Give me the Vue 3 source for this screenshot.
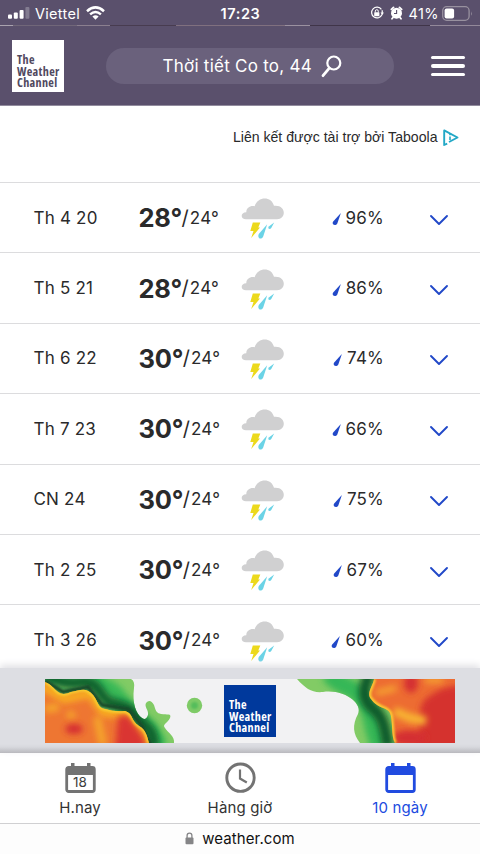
<script setup>
const days = [
  { date: 'Th 4 20', high: 28, low: 24, rain: 96 },
  { date: 'Th 5 21', high: 28, low: 24, rain: 86 },
  { date: 'Th 6 22', high: 30, low: 24, rain: 74 },
  { date: 'Th 7 23', high: 30, low: 24, rain: 66 },
  { date: 'CN 24', high: 30, low: 24, rain: 75 },
  { date: 'Th 2 25', high: 30, low: 24, rain: 67 },
  { date: 'Th 3 26', high: 30, low: 24, rain: 60 },
]
</script>

<template>
  <div class="screen">
    <header class="top">
      <div class="status">
        <div class="status-left">
          <svg class="signal" width="22" height="12" viewBox="0 0 22 12">
            <rect x="0" y="7.5" width="4" height="4.2" rx="1" fill="#fff" />
            <rect x="5.8" y="5.4" width="4" height="6.3" rx="1" fill="#fff" />
            <rect x="11.6" y="3" width="4" height="8.7" rx="1" fill="#fff" />
            <rect x="17.4" y="0" width="4" height="11.7" rx="1" fill="#fff" opacity=".25" />
          </svg>
          <span class="carrier">Viettel</span>
          <svg class="wifi" width="19" height="14" viewBox="0 0 19 14">
            <g fill="none" stroke="#fff" stroke-width="2.5">
              <path d="M1 5.2Q9.5-2.4 18 5.2" />
              <path d="M4.1 8.4Q9.5 3.6 14.9 8.4" />
            </g>
            <path d="M6.4 10.5Q9.5 7.9 12.6 10.5L9.5 13.8Z" fill="#fff" />
          </svg>
        </div>
        <span class="time">17:23</span>
        <div class="status-right">
          <svg width="14" height="14" viewBox="0 0 14 14">
            <path d="M11.4 3.4A5.4 5.4 0 1 0 12 8.6" fill="none" stroke="#fff" stroke-width="1.2" />
            <path d="M12 4.2A5.4 5.4 0 0 1 12.2 7" fill="none" stroke="#fff" stroke-width="1.2" />
            <path d="M10.5 6.6h3.4L12.2 9.2z" fill="#fff" />
            <rect x="4.2" y="6.2" width="5.2" height="4" rx=".6" fill="#fff" />
            <path d="M5.3 6.5V5.2a1.5 1.5 0 0 1 3 0v1.3" fill="none" stroke="#fff" stroke-width="1" />
          </svg>
          <svg class="alarm" width="13" height="14" viewBox="0 0 13 14">
            <circle cx="6.5" cy="7.2" r="5.5" fill="#fff" />
            <path d="M1.400 3.400 3.500 1.400M11.600 3.400 9.500 1.400M3 11.500 2 12.800M10 11.500l1 1.300" stroke="#fff" stroke-width="1.800" stroke-linecap="round" />
            <path d="M6.6 4v3.5H4" fill="none" stroke="#5a506c" stroke-width="1.1" />
          </svg>
          <span class="percent">41%</span>
          <svg class="battery" width="31" height="15" viewBox="0 0 31 15">
            <rect x=".7" y=".7" width="26.4" height="13.6" rx="4" fill="none" stroke="#98919f" stroke-width="1.3" />
            <rect x="2.6" y="2.6" width="9.5" height="9.8" rx="2" fill="#fff" />
            <path d="M29 5.2Q30.5 7.5 29 9.8z" fill="#98919f" />
          </svg>
        </div>
      </div>
      <div class="sliver"></div>
      <div class="nav">
        <div class="logo">The<br />Weather<br />Channel</div>
        <div class="search">
          <span>Thời tiết Co to, 44</span>
          <svg width="21" height="23" viewBox="0 0 21 23">
            <circle cx="12.8" cy="8" r="6.5" fill="none" stroke="#fff" stroke-width="2.2" />
            <path d="M8.3 13.2 2 20.7" stroke="#fff" stroke-width="2.8" stroke-linecap="round" />
          </svg>
        </div>
        <div class="burger"><i></i><i></i><i></i></div>
      </div>
    </header>

    <div class="sponsored">
      <span>Liên kết được tài trợ bởi Taboola</span>
      <svg width="16" height="18" viewBox="0 0 16 18">
        <path d="M4.2 14.7 1.2 16V1.4L14.5 8.5 6 13" fill="none" stroke="#22a8c6" stroke-width="1.9" stroke-linejoin="round" />
        <path d="M7 5v1.300M7 7.400V11" stroke="#22a8c6" stroke-width="1.600" />
      </svg>
    </div>

    <main class="days">
      <div v-for="day in days" :key="day.date" class="day">
        <span class="date">{{ day.date }}</span>
        <div class="temps">
          <b>{{ day.high }}°</b><span class="slash">/</span><span class="low">{{ day.low }}°</span>
        </div>
        <svg class="storm" width="44" height="43" viewBox="0 0 44 43">
          <path d="M5 22.200C-.8 22.200-.8 15.500 5.300 15.300 5.200 10.800 9.500 8.300 13.600 9.300 16.700-1 30.500-1.200 33 8.800 45.500 7.500 45.500 22.200 36 22.200Z" fill="#d0d0d1" />
          <path d="M11.800 25.500H19.300l-2 5H19L10.200 41l2.300-7H9.300Z" fill="#ecd91c" />
          <path d="M26.200 27.300 17.800 37C15.800 41 20.300 43.500 22.200 39.500Z" fill="#6bd3e6" />
          <path d="M33.200 25.400 27.800 29.500C26.100 31.500 29 33.200 30.400 30.800Z" fill="#6bd3e6" />
        </svg>
        <div class="rain">
          <svg width="10" height="14" viewBox="0 0 10 14">
            <path d="M8.900 1.100 1.200 9.500C-.8 12.300 3.300 14.500 5.300 11.400Z" fill="#2148c8" />
          </svg>
          <span>{{ day.rain }}%</span>
        </div>
        <svg class="chevron" width="20" height="12" viewBox="0 0 20 12">
          <path d="M2 2 10 10 18 2" fill="none" stroke="#2148c8" stroke-width="1.900" stroke-linecap="round" stroke-linejoin="round" />
        </svg>
      </div>
    </main>

    <section class="ad">
      <div class="banner">
        <svg class="radar" width="410" height="64" viewBox="0 0 410 64">
          <defs>
            <filter id="soft" filterUnits="userSpaceOnUse" x="-20" y="-20" width="450" height="104"><feGaussianBlur stdDeviation="3.200" /></filter>
            <filter id="edge" filterUnits="userSpaceOnUse" x="-20" y="-20" width="450" height="104"><feGaussianBlur stdDeviation="1.200" /></filter>
            <clipPath id="greenLeft"><path d="M0 0H86Q90 2 89 9C87 24 91 35 97 39Q101 42 103 36C104 31 99 28 101 24Q105 19 109 26C111 33 112 34 116 35C122 36 127 34 125 39C122 45 117 45 120 49C123 54 130 57 129 64H0Z" /></clipPath>
            <clipPath id="greenRight"><path d="M252 0C261 10 267 14 278 13C300 10 318 25 313 35C307 46 308 55 315 64H410V0Z" /></clipPath>
            <clipPath id="heatLeft"><path d="M0 3C6 5 9 10 13 13Q18 17 26 13C36 11 41 8 48 16C54 24 53 29 60 30Q69 33 80 32C89 35 85 41 94 47C101 51 102 57 104 64H0Z" /></clipPath>
            <clipPath id="heatRight"><path d="M329 0C328 7 321 14 326 20C333 30 342 28 345 34C348 40 346 58 350 64H410V0Z" /></clipPath>
          </defs>
          <rect width="410" height="64" fill="#f2f2f3" />
          <g clip-path="url(#greenLeft)">
            <rect width="135" height="64" fill="#82cb65" />
            <path d="M0-5H46C54 8 69 7 74 18C82 29 91 34 96 42C105 46 108 53 116 68" fill="none" stroke="#38b957" stroke-width="15" filter="url(#soft)" />
            <path d="M0-3C13 2 24 6 38 3C54 2 54 19 66 24C82 27 92 33 99 46C107 51 109 58 109 68" fill="none" stroke="#08602f" stroke-width="11" filter="url(#soft)" />
            <path d="M0 2 18 13 43 8 57 26 83 30 97 47 106 66" fill="none" stroke="#164c2c" stroke-width="4" filter="url(#edge)" />
          </g>
          <g clip-path="url(#heatLeft)">
            <rect width="110" height="64" fill="#ee7632" />
            <path d="M-3 7 20 20 45 14 58 33 82 36 102 66" fill="none" stroke="#f8ad24" stroke-width="9" filter="url(#soft)" />
            <path d="M0 30 14 28M28 33 24 39M52 38 58 66" fill="none" stroke="#f5a52a" stroke-width="8" filter="url(#soft)" />
            <ellipse cx="29" cy="50" rx="9" ry="5" fill="#d42a30" filter="url(#soft)" />
            <path d="M73 37 83 36 100 60 100 72H70Z" fill="#da3430" filter="url(#soft)" />
            <path d="M0 3C6 5 9 10 13 13Q18 17 26 13C36 11 41 8 48 16C54 24 53 29 60 30Q69 33 80 32C89 35 85 41 94 47C101 51 102 57 104 64" fill="none" stroke="#f8d12d" stroke-width="3.500" filter="url(#edge)" />
          </g>
          <g clip-path="url(#greenRight)">
            <rect x="245" width="165" height="64" fill="#82cb65" />
            <path d="M284-5C294 9 309 6 318 21C328 30 325 48 335 68" fill="none" stroke="#36b756" stroke-width="17" filter="url(#soft)" />
            <path d="M325-5C318 8 317 18 326 28C338 36 340 48 343 68" fill="none" stroke="#095a2c" stroke-width="12" filter="url(#soft)" />
          </g>
          <g clip-path="url(#heatRight)">
            <rect x="320" width="90" height="64" fill="#ed6c32" />
            <path d="M366 72C382 45 368 28 383 18S400 8 420 6V80Z" fill="#d5302f" filter="url(#soft)" />
            <ellipse cx="366" cy="4" rx="7" ry="10" fill="#d42f31" filter="url(#soft)" />
            <ellipse cx="364" cy="59" rx="17" ry="8" fill="#d42f31" filter="url(#soft)" />
            <path d="M349 32 365 39 381 42" stroke="#f8b530" stroke-width="9" fill="none" filter="url(#soft)" />
            <path d="M331 14 351 9M380 1H398" stroke="#f5a130" stroke-width="6" fill="none" filter="url(#soft)" />
            <path d="M329 0C328 7 321 14 326 20C333 30 342 28 345 34C348 40 346 58 350 64" fill="none" stroke="#f9ce32" stroke-width="4" filter="url(#edge)" />
          </g>
          <circle cx="149.500" cy="26.500" r="7.700" fill="#7fcb67" />
          <circle cx="149.500" cy="26.500" r="3.500" fill="#55bd5c" filter="url(#edge)" />
        </svg>
        <div class="logo blue">The<br />Weather<br />Channel</div>
      </div>
    </section>

    <nav class="tabs">
      <div class="tab">
        <div class="calendar">
          <svg width="31" height="31" viewBox="0 0 31 31">
            <rect x="1.700" y="5.500" width="27.600" height="24" rx="2" fill="none" stroke="currentColor" stroke-width="2.800" />
            <path d="M1 5h29v8H1zM6 1h3.500v6H6zM22 1h3.500v6H22z" fill="currentColor" />
          </svg>
          <span>18</span>
        </div>
        <span class="label">H.nay</span>
      </div>
      <div class="tab">
        <svg width="31" height="31" viewBox="0 0 31 31">
          <circle cx="15.500" cy="15.700" r="13.700" fill="none" stroke="currentColor" stroke-width="2.900" />
          <path d="M15 7.500V16.500L21.800 20.500" fill="none" stroke="currentColor" stroke-width="2.200" />
        </svg>
        <span class="label">Hàng giờ</span>
      </div>
      <div class="tab active">
        <svg width="31" height="31" viewBox="0 0 31 31">
          <rect x="1.700" y="5.500" width="27.600" height="24" rx="2" fill="none" stroke="currentColor" stroke-width="2.800" />
          <path d="M1 5h29v8H1zM6 1h3.500v6H6zM22 1h3.500v6H22z" fill="currentColor" />
        </svg>
        <span class="label">10 ngày</span>
      </div>
    </nav>

    <footer class="address">
      <svg width="9" height="13" viewBox="0 0 9 13">
        <rect x=".5" y="5.400" width="8" height="6.800" rx="1" fill="#858587" />
        <path d="M2.100 6V3.500a2.400 2.400 0 0 1 4.800 0V6" fill="none" stroke="#858587" stroke-width="1.300" />
      </svg>
      <span>weather.com</span>
    </footer>
  </div>
</template>

<style>
body {
  margin: 0;
  background: #fff;
}
</style>

<style scoped>
.screen {
  width: 480px;
  height: 854px;
  overflow: hidden;
  display: flex;
  flex-direction: column;
  background: #fff;
  color: #2a2a2b;
  font-family: Inter, "Liberation Sans", sans-serif;
}
svg {
  display: block;
  flex: none;
}
.top {
  height: 106px;
  flex: none;
  box-sizing: border-box;
  background: #5a506c;
  border-bottom: 1px solid #928c9e;
  color: #fff;
}
.status {
  height: 25px;
  display: grid;
  grid-template-columns: 1fr auto 1fr;
  align-items: center;
  padding: 1px 7px 0 8px;
  box-sizing: border-box;
}
.status-left,
.status-right {
  display: flex;
  align-items: center;
}
.status-right {
  justify-content: flex-end;
}
.carrier {
  margin-left: 5px;
  font-size: 14.500px;
  letter-spacing: 0.3px;
}
.wifi {
  margin-left: 6px;
}
.time {
  font-size: 14.500px;
  font-weight: 600;
  letter-spacing: 0.6px;
}
.alarm {
  margin-left: 6px;
}
.percent {
  margin-left: 6px;
  font-size: 14.500px;
  letter-spacing: 0.4px;
}
.battery {
  margin-left: 3px;
}
.sliver {
  height: 1px;
  background: linear-gradient(90deg, #aaa3af 0 13px, #716779 13px 77px, #8b7f8f 77px 110px, #483c50 110px 176px, #80707f 176px 285px, #9b91a0 285px 310px, #403549 310px 430px, #93899a 430px);
}
.nav {
  height: 80px;
  display: flex;
  align-items: center;
  padding: 0 15px 0 12px;
  box-sizing: border-box;
}
.logo {
  width: 52px;
  height: 52px;
  box-sizing: border-box;
  padding: 14px 0 0 5px;
  background: #fff;
  color: #51495f;
  font: 700 12.200px/11.500px "Open Sans", "Noto Sans", sans-serif;
  font-stretch: 75%;
  letter-spacing: 0.3px;
}
.search {
  width: 288px;
  height: 36px;
  margin-left: 42px;
  display: flex;
  align-items: center;
  box-sizing: border-box;
  padding-left: 56.500px;
  border-radius: 18px;
  background: #6a617c;
  font-size: 17px;
  letter-spacing: 0.250px;
  white-space: nowrap;
}
.search svg {
  margin-left: 9px;
}
.burger {
  margin-left: auto;
  width: 34px;
  display: flex;
  flex-direction: column;
  gap: 5px;
}
.burger i {
  height: 3.500px;
  border-radius: 2px;
  background: #fff;
}
.sponsored {
  height: 76px;
  flex: none;
  box-sizing: border-box;
  display: flex;
  justify-content: flex-end;
  align-items: flex-start;
  gap: 5px;
  padding: 23px 21.500px 0 0;
  font: 14.100px/17px "Liberation Sans", sans-serif;
}
.days {
  height: 486px;
  flex: none;
  overflow: hidden;
}
.day {
  height: 70.400px;
  box-sizing: border-box;
  display: grid;
  grid-template-columns: 105px 102px 88px 100px 20px;
  align-items: center;
  padding-left: 33.500px;
  border-top: 1.500px solid #dcdcde;
}
.date,
.rain {
  font-size: 17px;
  letter-spacing: 0.2px;
}
.temps {
  display: flex;
  align-items: center;
  white-space: nowrap;
}
.temps b {
  font-size: 25.500px;
  font-weight: 700;
  letter-spacing: -0.2px;
}
.slash {
  margin-left: -0.5px;
  font-size: 20px;
}
.low {
  font-size: 17px;
  margin-left: 1px;
  letter-spacing: 0.2px;
}
.storm {
  margin-top: 2px;
}
.rain {
  display: flex;
  align-items: center;
  gap: 4px;
  width: 55.500px;
  justify-content: flex-end;
}
.rain svg {
  margin-top: 3px;
}
.chevron {
  margin-top: 4px;
}
.ad {
  height: 85px;
  flex: none;
  position: relative;
  box-sizing: border-box;
  padding: 11px 25px 0 45px;
  background: linear-gradient(#dddee3 0 76px, #d7d8dd 79px, #b9b9be 85px);
  box-shadow: 0 -3px 7px #e1e1e5;
}
.banner {
  width: 410px;
  height: 64px;
  position: relative;
  overflow: hidden;
}
.blue {
  position: absolute;
  left: 179px;
  top: 6px;
  background: #00399c;
  color: #fff;
}
.tabs {
  height: 71px;
  flex: none;
  box-sizing: border-box;
  display: grid;
  grid-template-columns: repeat(3, 1fr);
  border-bottom: 1.500px solid #d0d0d2;
}
.tab {
  display: flex;
  flex-direction: column;
  align-items: center;
  padding-top: 9px;
  color: #737373;
}
.calendar {
  position: relative;
}
.calendar span {
  position: absolute;
  inset: 12px 0 0;
  text-align: center;
  font-size: 13.500px;
  line-height: 16px;
  color: #3d3d3d;
}
.label {
  margin-top: 6px;
  font-size: 15px;
  line-height: 18px;
  letter-spacing: 0.15px;
  color: #333;
}
.active,
.active .label {
  color: #214be0;
}
.address {
  flex: 1;
  display: flex;
  align-items: center;
  justify-content: center;
  gap: 8px;
  padding-bottom: 2px;
  background: #fdfdfd;
  color: #111;
  font-size: 15px;
  letter-spacing: 0.1px;
}
</style>
